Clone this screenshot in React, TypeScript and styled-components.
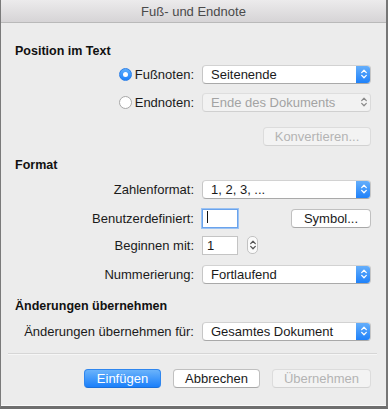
import React from 'react';
import styled, { createGlobalStyle } from 'styled-components';

const GlobalStyle = createGlobalStyle`
  html, body {
    margin: 0;
    padding: 0;
    background: #5f5f5f;
  }
  body {
    font-family: 'Liberation Sans', Arial, sans-serif;
    font-size: 13px;
    color: #1a1a1a;
  }
`;

const Window = styled.div`
  width: 388px;
  height: 409px;
  box-sizing: border-box;
  background: #ececec;
  border-left: 1px solid #7a7a7a;
  border-right: 2px solid #767676;
  border-bottom: 3px solid #6e6e6e;
  display: flex;
  flex-direction: column;
  overflow: hidden;
`;

const TitleBar = styled.div`
  height: 22px;
  flex-shrink: 0;
  background: linear-gradient(#ecebec, #d6d4d6);
  border-bottom: 1px solid #b9b9b9;
  display: flex;
  align-items: center;
  justify-content: center;
  color: #4a4a4a;
  font-size: 13px;
`;

const Body = styled.div`
  flex: 1;
  padding: 0 15px 0 13px;
  display: flex;
  flex-direction: column;
  border-bottom: 1px solid #fafafa;
`;

const Heading = styled.div<{ $top: number }>`
  margin-top: ${({ $top }) => $top}px;
  font-weight: bold;
  font-size: 12.5px;
  line-height: 16px;
  color: #111;
  padding-left: 1px;
`;

const Row = styled.div<{ $top: number }>`
  margin-top: ${({ $top }) => $top}px;
  display: grid;
  grid-template-columns: 180px 169px;
  column-gap: 8px;
  align-items: center;
  height: 20px;
`;

const Label = styled.div`
  text-align: right;
  color: #1a1a1a;
  white-space: nowrap;
  display: flex;
  justify-content: flex-end;
  align-items: center;
  gap: 3px;
`;

const Radio = styled.span<{ $on?: boolean }>`
  width: 13px;
  height: 13px;
  box-sizing: border-box;
  border-radius: 50%;
  display: inline-flex;
  align-items: center;
  justify-content: center;
  background: ${({ $on }) => ($on ? 'linear-gradient(#5eaefc, #1e82fb)' : '#fff')};
  border: 1px solid ${({ $on }) => ($on ? '#2b7fe8' : '#a8a8a8')};
  &::after {
    content: '';
    width: 5px;
    height: 5px;
    border-radius: 50%;
    background: #fff;
    display: ${({ $on }) => ($on ? 'block' : 'none')};
  }
`;

const SelectBox = styled.div<{ $disabled?: boolean }>`
  height: 19px;
  box-sizing: border-box;
  border-radius: 4px;
  background: ${({ $disabled }) => ($disabled ? '#f2f2f2' : '#fff')};
  border: 1px solid ${({ $disabled }) => ($disabled ? '#dadada' : '#c6c6c6')};
  border-top-color: ${({ $disabled }) => ($disabled ? '#dedede' : '#d2d2d2')};
  border-bottom-color: ${({ $disabled }) => ($disabled ? '#d0d0d0' : '#a9a9a9')};
  display: flex;
  align-items: center;
  overflow: hidden;
  color: ${({ $disabled }) => ($disabled ? '#a3a3a3' : '#1a1a1a')};
`;

const SelectText = styled.span`
  flex: 1;
  padding-left: 8px;
  white-space: nowrap;
`;

const Stepper = styled.span<{ $blue?: boolean }>`
  width: 15px;
  align-self: stretch;
  margin: -1px -1px -1px 0;
  border-radius: 0 4px 4px 0;
  display: flex;
  align-items: center;
  justify-content: center;
  background: ${({ $blue }) => ($blue ? 'linear-gradient(#69b1fb, #1b7ffa)' : 'transparent')};
  color: ${({ $blue }) => ($blue ? '#fff' : '#8a8a8a')};
`;

const Chevrons = ({ size = 12 }: { size?: number }) => (
  <svg width="8" height={size} viewBox="0 0 8 12" fill="none" stroke="currentColor" strokeWidth="1.3" strokeLinecap="round" strokeLinejoin="round">
    <path d="M1.7 4.6 L4 2.3 L6.3 4.6" />
    <path d="M1.7 7.4 L4 9.7 L6.3 7.4" />
  </svg>
);

const Select = ({ value, disabled }: { value: string; disabled?: boolean }) => (
  <SelectBox $disabled={disabled}>
    <SelectText>{value}</SelectText>
    <Stepper $blue={!disabled}>
      <Chevrons />
    </Stepper>
  </SelectBox>
);

const Controls = styled.div`
  display: flex;
  align-items: center;
  justify-content: space-between;
`;

const Group = styled.div`
  display: flex;
  align-items: center;
  gap: 9px;
`;

const TextField = styled.div<{ $focus?: boolean }>`
  width: 36px;
  height: 19px;
  box-sizing: border-box;
  background: #fff;
  border: 1px solid ${({ $focus }) => ($focus ? '#6aa3ec' : '#c4c4c4')};
  box-shadow: ${({ $focus }) => ($focus ? '0 0 0 1px #9cc3f3' : 'none')};
  display: flex;
  align-items: center;
  padding-left: 4px;
  font-size: 13px;
`;

const Caret = styled.span`
  width: 1px;
  height: 12px;
  background: #111;
  margin-top: -3px;
`;

const SmallStepper = styled.span`
  width: 11px;
  height: 18px;
  box-sizing: border-box;
  border: 1px solid #c2c2c2;
  border-radius: 5px;
  background: #fafafa;
  display: flex;
  align-items: center;
  justify-content: center;
  color: #555;
`;

const Button = styled.div<{ $w: number; $kind?: 'primary' | 'disabled' }>`
  width: ${({ $w }) => $w}px;
  height: 19px;
  box-sizing: border-box;
  border-radius: 4px;
  display: flex;
  align-items: center;
  justify-content: center;
  white-space: nowrap;
  background: ${({ $kind }) =>
    $kind === 'primary' ? 'linear-gradient(#6ab3fb, #1a7ffa)' : $kind === 'disabled' ? '#f3f3f3' : '#fff'};
  border: 1px solid
    ${({ $kind }) => ($kind === 'primary' ? '#2f86ee' : $kind === 'disabled' ? '#dcdcdc' : '#c0c0c0')};
  border-bottom-color: ${({ $kind }) => ($kind === 'primary' ? '#1a6fd8' : $kind === 'disabled' ? '#d2d2d2' : '#a8a8a8')};
  color: ${({ $kind }) => ($kind === 'primary' ? '#fff' : $kind === 'disabled' ? '#b3b3b3' : '#1a1a1a')};
`;

const RightCell = styled.div`
  display: flex;
  justify-content: flex-end;
`;

const Separator = styled.div`
  margin: 12px -6px 0 -6px;
  height: 1px;
  background: #d6d6d6;
  border-bottom: 1px solid #f6f6f6;
`;

const ButtonBar = styled.div`
  margin-top: 14px;
  display: flex;
  justify-content: flex-end;
  gap: 12px;
`;

export default function App() {
  return (
    <>
      <GlobalStyle />
      <Window>
        <TitleBar>Fuß- und Endnote</TitleBar>
        <Body>
          <Heading $top={20}>Position im Text</Heading>
          <Row $top={5}>
            <Label>
              <Radio $on />
              Fußnoten:
            </Label>
            <Select value="Seitenende" />
          </Row>
          <Row $top={8}>
            <Label>
              <Radio />
              Endnoten:
            </Label>
            <Select value="Ende des Dokuments" disabled />
          </Row>
          <Row $top={14}>
            <span />
            <RightCell>
              <Button $w={108} $kind="disabled">Konvertieren...</Button>
            </RightCell>
          </Row>

          <Heading $top={11}>Format</Heading>
          <Row $top={6}>
            <Label>Zahlenformat:</Label>
            <Select value="1, 2, 3, ..." />
          </Row>
          <Row $top={9}>
            <Label>Benutzerdefiniert:</Label>
            <Controls>
              <TextField $focus>
                <Caret />
              </TextField>
              <Button $w={80}>Symbol...</Button>
            </Controls>
          </Row>
          <Row $top={7}>
            <Label>Beginnen mit:</Label>
            <Group>
              <TextField>1</TextField>
              <SmallStepper>
                <Chevrons size={12} />
              </SmallStepper>
            </Group>
          </Row>
          <Row $top={9}>
            <Label>Nummerierung:</Label>
            <Select value="Fortlaufend" />
          </Row>

          <Heading $top={14}>Änderungen übernehmen</Heading>
          <Row $top={7}>
            <Label>Änderungen übernehmen für:</Label>
            <Select value="Gesamtes Dokument" />
          </Row>

          <Separator />

          <ButtonBar>
            <Button $w={77} $kind="primary">Einfügen</Button>
            <Button $w={87}>Abbrechen</Button>
            <Button $w={99} $kind="disabled">Übernehmen</Button>
          </ButtonBar>
        </Body>
      </Window>
    </>
  );
}
